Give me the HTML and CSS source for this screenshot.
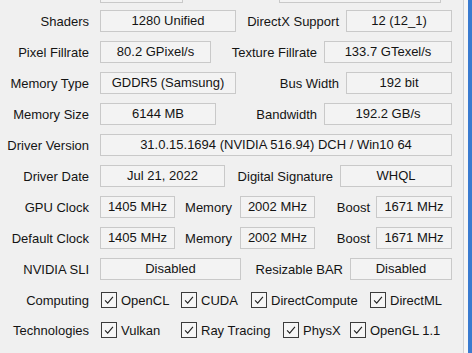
FILE: index.html
```html
<!DOCTYPE html>
<html>
<head>
<meta charset="utf-8">
<link rel="stylesheet" href="styles.css">
</head>
<body>
<div class="frame">
  <div class="panel">
    <div class="row partial">
      <div class="lbl"></div>
      <div class="box stub w83"></div>
      <div class="gap96"></div>
      <div class="box stub w162"></div>
    </div>

    <div class="row">
      <div class="lbl">Shaders</div>
      <div class="box w136">1280 Unified</div>
      <div class="lbl2">DirectX Support</div>
      <div class="box w106">12 (12_1)</div>
    </div>

    <div class="row">
      <div class="lbl">Pixel Fillrate</div>
      <div class="box w111">80.2 GPixel/s</div>
      <div class="lbl2">Texture Fillrate</div>
      <div class="box w128">133.7 GTexel/s</div>
    </div>

    <div class="row">
      <div class="lbl">Memory Type</div>
      <div class="box w136">GDDR5 (Samsung)</div>
      <div class="lbl2">Bus Width</div>
      <div class="box w106">192 bit</div>
    </div>

    <div class="row">
      <div class="lbl">Memory Size</div>
      <div class="box w116">6144 MB</div>
      <div class="lbl2">Bandwidth</div>
      <div class="box w128">192.2 GB/s</div>
    </div>

    <div class="row">
      <div class="lbl">Driver Version</div>
      <div class="box grow">31.0.15.1694 (NVIDIA 516.94) DCH / Win10 64</div>
    </div>

    <div class="row">
      <div class="lbl">Driver Date</div>
      <div class="box w125">Jul 21, 2022</div>
      <div class="lbl2">Digital Signature</div>
      <div class="box w112">WHQL</div>
    </div>

    <div class="row">
      <div class="lbl">GPU Clock</div>
      <div class="box w75">1405 MHz</div>
      <div class="lbl3 mem">Memory</div>
      <div class="box w75">2002 MHz</div>
      <div class="lbl3 boost">Boost</div>
      <div class="box w76">1671 MHz</div>
    </div>

    <div class="row">
      <div class="lbl">Default Clock</div>
      <div class="box w75">1405 MHz</div>
      <div class="lbl3 mem">Memory</div>
      <div class="box w75">2002 MHz</div>
      <div class="lbl3 boost">Boost</div>
      <div class="box w76">1671 MHz</div>
    </div>

    <div class="row">
      <div class="lbl">NVIDIA SLI</div>
      <div class="box w141">Disabled</div>
      <div class="lbl2">Resizable BAR</div>
      <div class="box w102">Disabled</div>
    </div>

    <div class="row checks first">
      <div class="lbl">Computing</div>
      <div class="chk c80"><span class="cb"><svg viewBox="0 0 16 16"><polyline points="3.5,8.5 6.5,11.5 12.5,4.5"/></svg></span>OpenCL</div>
      <div class="chk c70"><span class="cb"><svg viewBox="0 0 16 16"><polyline points="3.5,8.5 6.5,11.5 12.5,4.5"/></svg></span>CUDA</div>
      <div class="chk c119"><span class="cb"><svg viewBox="0 0 16 16"><polyline points="3.5,8.5 6.5,11.5 12.5,4.5"/></svg></span>DirectCompute</div>
      <div class="chk"><span class="cb"><svg viewBox="0 0 16 16"><polyline points="3.5,8.5 6.5,11.5 12.5,4.5"/></svg></span>DirectML</div>
    </div>

    <div class="row checks">
      <div class="lbl">Technologies</div>
      <div class="chk c80"><span class="cb"><svg viewBox="0 0 16 16"><polyline points="3.5,8.5 6.5,11.5 12.5,4.5"/></svg></span>Vulkan</div>
      <div class="chk c102"><span class="cb"><svg viewBox="0 0 16 16"><polyline points="3.5,8.5 6.5,11.5 12.5,4.5"/></svg></span>Ray Tracing</div>
      <div class="chk c67"><span class="cb"><svg viewBox="0 0 16 16"><polyline points="3.5,8.5 6.5,11.5 12.5,4.5"/></svg></span>PhysX</div>
      <div class="chk"><span class="cb"><svg viewBox="0 0 16 16"><polyline points="3.5,8.5 6.5,11.5 12.5,4.5"/></svg></span>OpenGL 1.1</div>
    </div>
  </div>
  <div class="spacer"></div>
  <div class="edge"></div>
</div>
</body>
</html>
```

FILE: styles.css
```css
html, body {
  margin: 0;
  padding: 0;
  background: #f0f0f0;
}
body {
  width: 472px;
  height: 353px;
  overflow: hidden;
  font-family: "Liberation Sans", Arial, sans-serif;
  font-size: 13px;
  color: #141414;
}
.frame {
  display: flex;
  height: 353px;
}
.panel {
  width: 463px;
  border-right: 1px solid #d2d2d2;
  background: #f0f0f0;
}
.spacer {
  width: 4px;
  background: #f7f7f7;
}
.edge {
  width: 4px;
  background: #3a7bd0;
}
.row {
  display: flex;
  align-items: center;
  width: 452px;
  height: 22px;
  margin-bottom: 9px;
}
.row.partial {
  height: 3px;
  margin-bottom: 7px;
  align-items: flex-start;
}
.lbl {
  width: 89px;
  flex: none;
  text-align: right;
  margin-right: 11px;
  white-space: nowrap;
}
.lbl2 {
  flex: 1;
  text-align: right;
  padding-right: 7px;
  white-space: nowrap;
}
.lbl3 {
  flex: none;
  text-align: right;
  white-space: nowrap;
}
.lbl3.mem { width: 57px; padding-right: 8px; }
.lbl3.boost { width: 55px; padding-right: 6px; }
.box {
  flex: none;
  box-sizing: border-box;
  height: 22px;
  line-height: 20px;
  border: 1px solid #c9c9c9;
  background: #f3f3f3;
  text-align: center;
  white-space: nowrap;
  overflow: hidden;
}
.box.stub {
  height: 3px;
  border-top: none;
}
.gap96 { width: 96px; flex: none; }
.box.grow { flex: 1; }
.w75 { width: 75px; }
.w76 { width: 76px; }
.w83 { width: 83px; }
.w102 { width: 102px; }
.w106 { width: 106px; }
.w111 { width: 111px; }
.w112 { width: 112px; }
.w116 { width: 116px; }
.w125 { width: 125px; }
.w128 { width: 128px; }
.w136 { width: 136px; }
.w141 { width: 141px; }
.w162 { width: 162px; }

.row.checks {
  margin-bottom: 8px;
}
.row.checks.first {
  margin-top: 2px;
}
.row.checks .lbl {
  margin-right: 12px;
}
.chk {
  display: flex;
  align-items: center;
  flex: none;
  white-space: nowrap;
}
.c67 { width: 67px; }
.c70 { width: 70px; }
.c80 { width: 80px; }
.c102 { width: 102px; }
.c119 { width: 119px; }
.cb {
  box-sizing: border-box;
  width: 16px;
  height: 16px;
  border: 1px solid #3c3c3c;
  background: #f6f6f6;
  margin-right: 4px;
  display: flex;
}
.cb svg {
  width: 14px;
  height: 14px;
}
.cb polyline {
  fill: none;
  stroke: #222;
  stroke-width: 1.3;
}
```
